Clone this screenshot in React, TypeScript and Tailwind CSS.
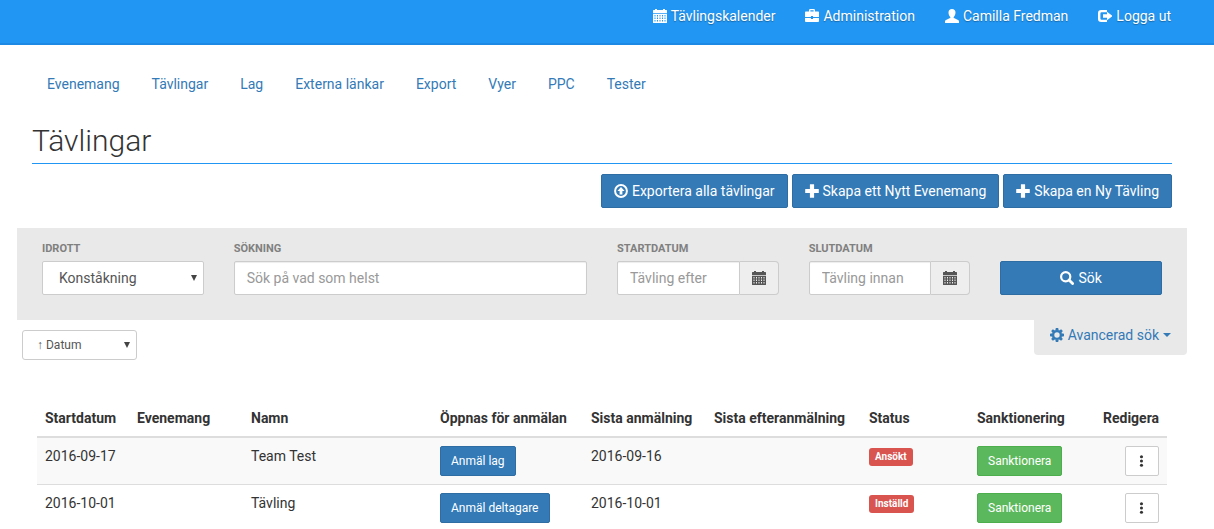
import type { ReactNode } from "react"

interface IconProps {
  size?: number
  children: ReactNode
}

function Icon({ size = 14, children }: IconProps) {
  return (
    <svg
      width={size}
      height={size}
      viewBox="0 0 14 14"
      fill="currentColor"
      aria-hidden="true"
      className="shrink-0"
    >
      {children}
    </svg>
  )
}

const calendarCells = [6, 8.5, 11].flatMap((y) =>
  [1.5, 4, 6.5, 9, 11.5].map((x) => `M${x} ${y}h1v1.4h-1z`)
)

function CalendarIcon() {
  return (
    <Icon>
      <path d="M2 0h2v1h6V0h2v1h1.4q.6 0 .6.6V4H0V1.6Q0 1 .6 1H2z" />
      <path fillRule="evenodd" d={`M0 4.700h14v8.700q0 .6-.6.6H.6Q0 14 0 13.4z${calendarCells.join("")}`} />
    </Icon>
  )
}

function BriefcaseIcon() {
  return (
    <Icon>
      <path
        fillRule="evenodd"
        d="M4 2.500V1.300Q4 0 5.300 0h3.400Q10 0 10 1.300V2.500h3.200q.8 0 .8.800V8H8V7H6v1H0V3.300Q0 2.500.8 2.500zM5.400 2.500h3.200V1.300H5.400z"
      />
      <path d="M0 9h6v1h2V9h6v3.100q0 .9-.9.9H.9Q0 13 0 12.100z" />
    </Icon>
  )
}

function UserIcon() {
  return (
    <Icon>
      <path d="M7 0c2.200 0 3.500 1.300 3.500 3.500 0 1.700-.7 3.500-1.700 4.400-.3.300-.2 1 .2 1.200l4 1.900c.8.400 1.200.9 1.200 1.700V14H-.2v-1.300c0-.8.400-1.300 1.200-1.700l4-1.900c.4-.2.5-.9.200-1.200-1-.9-1.700-2.700-1.700-4.400C3.500 1.300 4.800 0 7 0z" />
    </Icon>
  )
}

function LogoutIcon() {
  return (
    <Icon>
      <path d="M9 1v2.200H3.600Q2.400 3.200 2.400 4.400v5.200q0 1.200 1.200 1.200H9V13H3.200Q0 13 0 9.800V4.200Q0 1 3.200 1z" />
      <path d="M9 2.700 14.600 7 9 11.300V8.700H5V5.300h4z" />
    </Icon>
  )
}

function UploadIcon() {
  return (
    <Icon>
      <circle cx="7" cy="7" r="5.900" fill="none" stroke="currentColor" strokeWidth="2" />
      <path d="M7 2.900 10.600 7H8.400v3.600H5.600V7H3.400z" />
    </Icon>
  )
}

function PlusIcon() {
  return (
    <Icon>
      <path d="M4.900.6q0-.4.400-.4h3.400q.4 0 .4.400v4.300h4.300q.4 0 .4.400v3.400q0 .4-.4.400H9.100v4.300q0 .4-.4.400H5.300q-.4 0-.4-.4V9.100H.6q-.4 0-.4-.4V5.300q0-.4.400-.4h4.300z" />
    </Icon>
  )
}

function SearchIcon() {
  return (
    <Icon>
      <circle cx="5.700" cy="5.700" r="4.600" fill="none" stroke="currentColor" strokeWidth="2.200" />
      <path d="m9 9 3.600 3.600" fill="none" stroke="currentColor" strokeWidth="2.800" strokeLinecap="round" />
    </Icon>
  )
}

const cogTeeth = [0, 45, 90, 135, 180, 225, 270, 315]

function CogIcon() {
  return (
    <Icon>
      <circle cx="7" cy="7" r="3.900" fill="none" stroke="currentColor" strokeWidth="2.400" />
      {cogTeeth.map((angle) => (
        <path key={angle} d="M5.800 0h2.400l.5 2.600H5.300z" transform={`rotate(${angle} 7 7)`} />
      ))}
    </Icon>
  )
}

function MoreIcon() {
  return (
    <Icon size={12}>
      <circle cx="6.400" cy="2" r="1.800" />
      <circle cx="6.400" cy="7" r="1.800" />
      <circle cx="6.400" cy="12" r="1.800" />
    </Icon>
  )
}

function SelectArrow() {
  return (
    <svg
      width="6"
      height="6"
      viewBox="0 0 6 6"
      aria-hidden="true"
      className="pointer-events-none absolute right-[7px] top-1/2 -translate-y-1/2 fill-[#444]"
    >
      <path d="M0 0h6L3 6z" />
    </svg>
  )
}

const userLinks = [
  { label: "Tävlingskalender", icon: <CalendarIcon /> },
  { label: "Administration", icon: <BriefcaseIcon /> },
  { label: "Camilla Fredman", icon: <UserIcon /> },
  { label: "Logga ut", icon: <LogoutIcon /> },
]

const tabs = ["Evenemang", "Tävlingar", "Lag", "Externa länkar", "Export", "Vyer", "PPC", "Tester"]

const actions = [
  { label: "Exportera alla tävlingar", icon: <UploadIcon /> },
  { label: "Skapa ett Nytt Evenemang", icon: <PlusIcon /> },
  { label: "Skapa en Ny Tävling", icon: <PlusIcon /> },
]

const columns = [
  { title: "Startdatum", width: "w-[92px]" },
  { title: "Evenemang", width: "w-[114px]" },
  { title: "Namn", width: "w-[189px]" },
  { title: "Öppnas för anmälan", width: "w-[151px]" },
  { title: "Sista anmälning", width: "w-[123px]" },
  { title: "Sista efteranmälning", width: "w-[155px]" },
  { title: "Status", width: "w-[108px]" },
  { title: "Sanktionering", width: "w-[126px]" },
  { title: "Redigera", width: "w-[72px]" },
]

const competitions = [
  { start: "2016-09-17", event: "", name: "Team Test", signup: "Anmäl lag", deadline: "2016-09-16", late: "", status: "Ansökt" },
  { start: "2016-10-01", event: "", name: "Tävling", signup: "Anmäl deltagare", deadline: "2016-10-01", late: "", status: "Inställd" },
]

const labelClass = "block text-[11px] leading-5 mb-0.5 font-bold uppercase text-[#808080]"
const primaryClass = "border border-[#2e6da4] bg-[#337ab7] text-white rounded-[2px]"
const inputClass =
  "block h-[34px] w-full min-w-0 border border-[#ccc] bg-white px-3 text-[#555] placeholder:text-[#999] shadow-[inset_0_1px_1px_rgba(0,0,0,0.075)]"

function DateField({ id, label, placeholder }: { id: string; label: string; placeholder: string }) {
  return (
    <div className="col-span-2">
      <label htmlFor={id} className={labelClass}>{label}</label>
      <div className="flex">
        <input id={id} type="text" placeholder={placeholder} className={`${inputClass} rounded-l-[2px]`} />
        <button
          type="button"
          aria-label={`Välj ${label}`}
          className="flex items-center rounded-r border border-l-0 border-[#ccc] bg-[#eee] px-3 text-[#555]"
        >
          <CalendarIcon />
        </button>
      </div>
    </div>
  )
}

export default function App() {
  return (
    <div className="bg-white font-[Roboto,sans-serif] text-sm leading-5 text-[#333]">
      <header className="h-[45px] border-b-2 border-[#1e88e5] bg-[#2196f3] pr-2.5">
        <nav className="mx-auto flex max-w-[1170px] justify-end gap-[30px] px-4 pt-1.5">
          {userLinks.map((link) => (
            <a
              key={link.label}
              href="#"
              className="flex items-center gap-1 text-white [text-shadow:0_1px_1px_rgba(0,0,0,0.3)]"
            >
              {link.icon}
              {link.label}
            </a>
          ))}
        </nav>
      </header>

      <div className="pr-2.5">
        <main className="mx-auto max-w-[1170px]">
          <nav className="flex gap-0.5 px-[15px] pt-[19px]">
            {tabs.map((tab) => (
              <a key={tab} href="#" className="px-[15px] py-2.5 text-[#337ab7]">
                {tab}
              </a>
            ))}
          </nav>

          <div className="px-[15px]">
            <h1 className="mt-5 border-b border-[#2196f3] pb-[5px] text-3xl leading-[34px] font-light">Tävlingar</h1>
            <div className="flex justify-end gap-1 pt-2.5">
              {actions.map((action) => (
                <button
                  key={action.label}
                  type="button"
                  className={`${primaryClass} flex h-[34px] items-center gap-1 px-3`}
                >
                  {action.icon}
                  {action.label}
                </button>
              ))}
            </div>
          </div>

          <form className="mt-5 grid grid-cols-12 gap-[30px] bg-[#e9e9e9] px-[25px] pt-[11px] pb-[25px]">
            <div className="col-span-2">
              <label htmlFor="sport" className={labelClass}>Idrott</label>
              <div className="relative">
                <select
                  id="sport"
                  className="h-[34px] w-full appearance-none rounded-[2px] border border-[#ccc] bg-white pl-4 text-[#555]"
                >
                  <option>Konståkning</option>
                </select>
                <SelectArrow />
              </div>
            </div>
            <div className="col-span-4">
              <label htmlFor="query" className={labelClass}>Sökning</label>
              <input id="query" type="text" placeholder="Sök på vad som helst" className={`${inputClass} rounded-[2px]`} />
            </div>
            <DateField id="from" label="Startdatum" placeholder="Tävling efter" />
            <DateField id="to" label="Slutdatum" placeholder="Tävling innan" />
            <div className="col-span-2 flex items-end">
              <button type="submit" className={`${primaryClass} flex h-[34px] w-full items-center justify-center gap-1`}>
                <SearchIcon />
                Sök
              </button>
            </div>
          </form>

          <div className="flex items-start justify-between">
            <div className="relative mt-2.5 ml-[5px]">
              <select
                aria-label="Sortering"
                className="h-[30px] w-[115px] appearance-none rounded-[3px] border border-[#ccc] bg-white pl-3.5 text-xs text-[#555]"
              >
                <option>↑ Datum</option>
              </select>
              <SelectArrow />
            </div>
            <button
              type="button"
              className="flex h-[35px] items-center gap-1 rounded-b bg-[#e9e9e9] px-4 pb-1.5 text-[#337ab7]"
            >
              <CogIcon />
              Avancerad sök
              <svg width="8" height="4" viewBox="0 0 8 4" fill="currentColor" aria-hidden="true">
                <path d="M0 0h8L4 4z" />
              </svg>
            </button>
          </div>

          <div className="px-5 pt-10">
            <table className="w-full table-fixed border-collapse">
              <thead>
                <tr className="border-b-2 border-[#ddd] text-left">
                  {columns.map((column) => (
                    <th key={column.title} className={`${column.width} p-2 font-bold whitespace-nowrap last:text-right`}>
                      {column.title}
                    </th>
                  ))}
                </tr>
              </thead>
              <tbody>
                {competitions.map((item) => (
                  <tr key={item.start} className="border-b border-[#ddd] align-top odd:bg-[#f9f9f9]">
                    <td className="p-2">{item.start}</td>
                    <td className="p-2">{item.event}</td>
                    <td className="p-2">{item.name}</td>
                    <td className="p-2">
                      <button type="button" className={`${primaryClass} block h-[30px] px-2.5 text-xs`}>
                        {item.signup}
                      </button>
                    </td>
                    <td className="p-2">{item.deadline}</td>
                    <td className="p-2">{item.late}</td>
                    <td className="px-2 py-2.5">
                      <span className="block w-fit rounded-[3px] bg-[#d9534f] px-1.5 text-[10px] leading-[18px] font-bold text-white">
                        {item.status}
                      </span>
                    </td>
                    <td className="p-2">
                      <button
                        type="button"
                        className="block h-[30px] rounded-[2px] border border-[#4cae4c] bg-[#5cb85c] px-2.5 text-xs text-white"
                      >
                        Sanktionera
                      </button>
                    </td>
                    <td className="p-2">
                      <button
                        type="button"
                        aria-label="Redigera"
                        className="ml-auto flex h-[30px] items-center rounded-[2px] border border-[#ccc] bg-white px-2.5"
                      >
                        <MoreIcon />
                      </button>
                    </td>
                  </tr>
                ))}
              </tbody>
            </table>
          </div>
        </main>
      </div>
    </div>
  )
}
